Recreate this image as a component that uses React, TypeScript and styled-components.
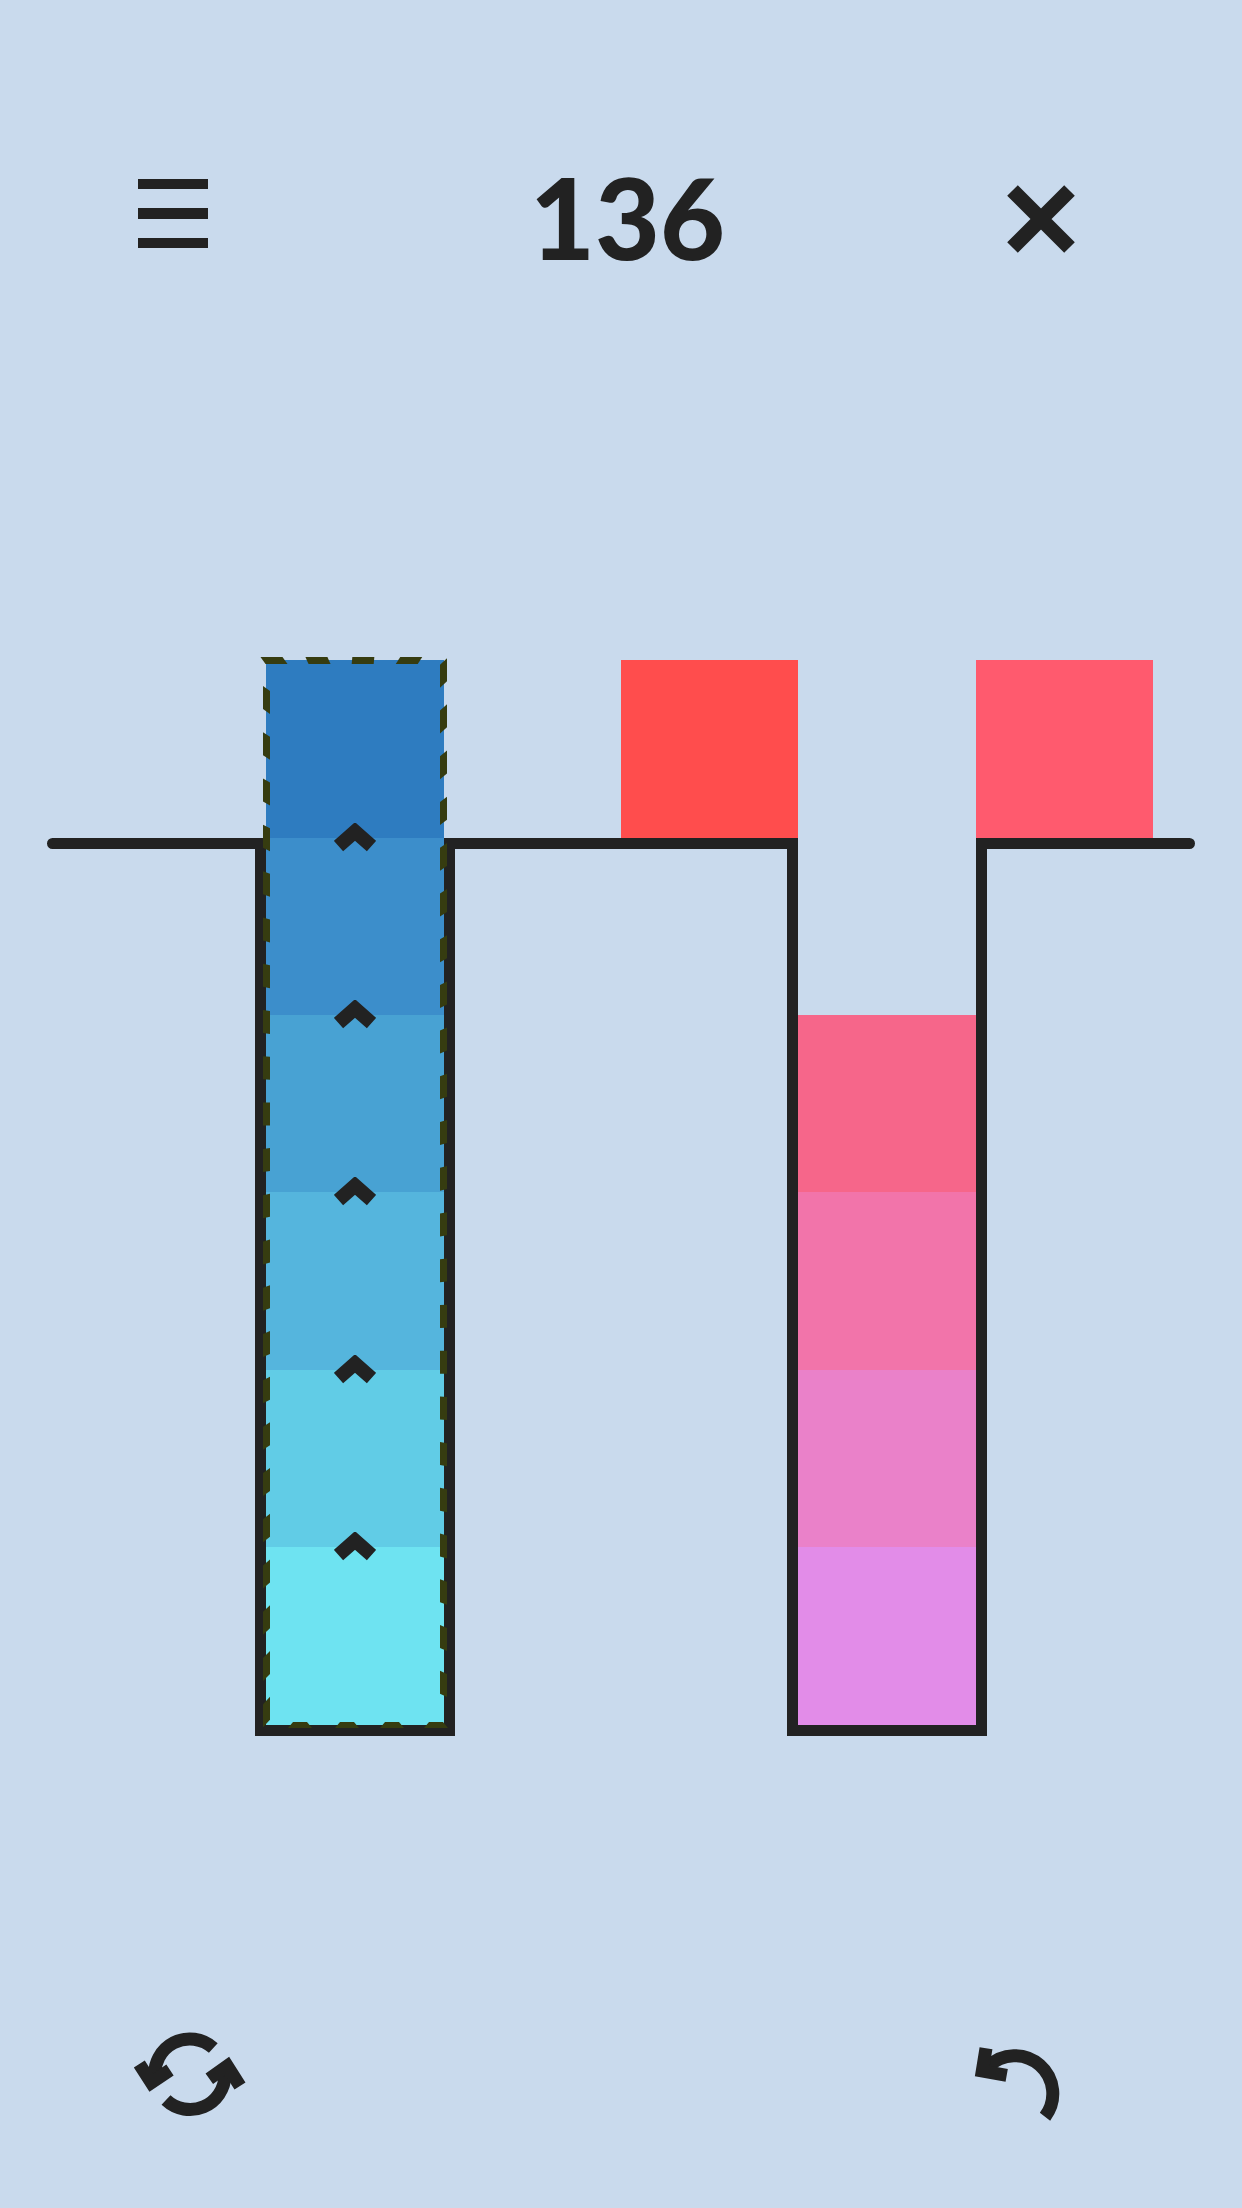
import { createGlobalStyle, styled } from "styled-components";

const INK = "#222222";
const DASH = "#363c10";

const GlobalStyle = createGlobalStyle`
  html, body {
    margin: 0;
    padding: 0;
    background: #c9daed;
  }
`;

const Page = styled.div`
  display: flex;
  flex-direction: column;
  width: 1242px;
  height: 2208px;
  overflow: hidden;
  background: #c9daed;
`;

const Header = styled.header`
  display: flex;
  align-items: center;
  height: 438px;
  padding-left: 138px;
`;

const MenuIcon = styled.div`
  display: flex;
  flex-direction: column;
  gap: 19px;
  width: 70px;
  margin-bottom: 11px;
`;

const MenuBar = styled.span`
  display: block;
  height: 10.5px;
  background: ${INK};
`;

const Score = styled.div`
  width: 187px;
  margin-left: 322px;
  margin-bottom: 5px;
  color: ${INK};
  font-family: "Lato", "Liberation Sans", sans-serif;
  font-size: 112px;
  font-weight: 900;
  line-height: 1;
  text-align: center;
`;

const CloseIcon = styled.svg`
  width: 68px;
  height: 68px;
  margin-left: 290px;
`;

const Board = styled.main`
  position: relative;
  display: grid;
  grid-template-columns: repeat(6, 177.4px);
  margin-top: 222.2px;
  padding: 0 0 11px 88.8px;
`;

const Track = styled.svg`
  position: absolute;
  top: 0;
  left: 0;
  width: 1242px;
  height: 1080px;
  overflow: visible;
`;

const Slot = styled.div<{ $raised?: boolean }>`
  position: relative;
  display: flex;
  flex-direction: column;
  justify-content: ${(props) => (props.$raised ? "flex-start" : "flex-end")};
  height: 1064.4px;
`;

const Block = styled.div<{ $color: string }>`
  position: relative;
  height: 177.4px;
  background: ${(props) => props.$color};
`;

const Chevron = styled.svg`
  position: absolute;
  top: -15px;
  left: 50%;
  width: 42px;
  height: 29px;
  margin-left: -21px;
`;

const Selection = styled.svg`
  position: absolute;
  top: -3px;
  left: -3px;
  width: 184px;
  height: 1071px;
  overflow: visible;
`;

const Footer = styled.footer`
  display: flex;
  justify-content: space-between;
  height: 100px;
  margin-top: 289px;
  padding: 0 172px 0 130px;
`;

const RefreshIcon = styled.svg`
  width: 120px;
  height: 100px;
`;

const UndoIcon = styled.svg`
  align-self: flex-end;
  width: 100px;
  height: 85px;
`;

const blues = ["#2e7cc0", "#3c8ecb", "#48a2d3", "#55b5dd", "#61cce6", "#6ee3f1"];
const pinks = ["#f6668a", "#f274aa", "#ea81c9", "#e28ce8"];

// selection box coordinates are local to the svg, page origin is 263,657
const ox = 263;
const oy = 657;

const clamp = (v: number, max: number) => Math.max(-max, Math.min(max, v));

function hDash(cx: number, y: number, s: number) {
  const x = cx - ox;
  const t = y - oy;
  return `${x - 11 + s / 2},${t} ${x + 11 + s / 2},${t} ${x + 11 - s / 2},${t + 7} ${x - 11 - s / 2},${t + 7}`;
}

function bottomDash(cx: number) {
  const x = cx - ox;
  const t = 1722 - oy;
  return `${x - 7},${t} ${x + 7},${t} ${x + 12},${t + 6} ${x - 12},${t + 6}`;
}

function vDash(x: number, cy: number, s: number) {
  const l = x - ox;
  const y = cy - oy;
  // s moves the outer end of the dash, -s the inner one
  const outer = x < 355 ? l : l + 7;
  const inner = x < 355 ? l + 7 : l;
  return `${outer},${y - 11.5 + s / 2} ${inner},${y - 11.5 - s / 2} ${inner},${y + 11.5 - s / 2} ${outer},${y + 11.5 + s / 2}`;
}

const topDashes = [274, 318, 363, 409];
const bottomDashes = [300, 347, 392, 436];
const leftDashes = Array.from({ length: 23 }, (_, i) => 700 + i * 46);
const rightDashes = Array.from({ length: 23 }, (_, i) => 673 + i * 45.95);

function App() {
  return (
    <Page>
      <GlobalStyle />
      <Header>
        <MenuIcon>
          <MenuBar />
          <MenuBar />
          <MenuBar />
        </MenuIcon>
        <Score>136</Score>
        <CloseIcon viewBox="0 0 68 68">
          <path d="M5.5 5.5 L62.5 62.5 M62.5 5.5 L5.5 62.5" stroke={INK} strokeWidth="15" fill="none" />
        </CloseIcon>
      </Header>

      <Board>
        <Track viewBox="0 0 1242 1080">
          <path
            d="M52.5 183.5 H260.5 V1070.5 H449.5 V183.5 H792.5 V1070.5 H981.5 V183.5 H1189.5"
            stroke={INK}
            strokeWidth="11"
            strokeLinecap="round"
            strokeLinejoin="miter"
            fill="none"
          />
        </Track>
        <Slot />
        <Slot>
          {blues.map((color, i) => (
            <Block key={color} $color={color}>
              {i > 0 && (
                <Chevron viewBox="0 0 42 29">
                  <path d="M4.5 23 L21 8.5 L37.5 23" stroke={INK} strokeWidth="14" fill="none" />
                </Chevron>
              )}
            </Block>
          ))}
          <Selection viewBox="0 0 184 1071">
            <g fill={DASH}>
              {topDashes.map((cx) => (
                <polygon key={cx} points={hDash(cx, 657, clamp((cx - 355) / 12, 5))} />
              ))}
              {bottomDashes.map((cx) => (
                <polygon key={cx} points={bottomDash(cx)} />
              ))}
              {leftDashes.map((cy) => (
                <polygon key={cy} points={vDash(263, cy, (cy - 1097) * 0.0126)} />
              ))}
              {rightDashes.map((cy) => (
                <polygon key={cy} points={vDash(440, cy, (cy - 1347) * 0.0098)} />
              ))}
            </g>
          </Selection>
        </Slot>
        <Slot />
        <Slot $raised>
          <Block $color="#ff4d4d" />
        </Slot>
        <Slot>
          {pinks.map((color) => (
            <Block key={color} $color={color} />
          ))}
        </Slot>
        <Slot $raised>
          <Block $color="#ff5a6e" />
        </Slot>
      </Board>

      <Footer>
        <RefreshIcon viewBox="0 0 120 100">
          <g stroke={INK} strokeWidth="13" fill="none">
            <path d="M83.3 23 A35 35 0 0 0 25 53" />
            <path d="M9.3 39 L21.3 57.7 L40 45" />
            <path d="M36 75 A35 35 0 0 0 95 50" />
            <path d="M79.3 53.7 L97.3 41 L110 61" />
          </g>
        </RefreshIcon>
        <UndoIcon viewBox="0 0 100 85">
          <g stroke={INK} strokeWidth="13" fill="none">
            <path d="M75 76.7 A38 38 0 0 0 18 26.7" />
            <path d="M16 8.3 L12.3 31 L36.7 35.3" />
          </g>
        </UndoIcon>
      </Footer>
    </Page>
  );
}

export default App;
